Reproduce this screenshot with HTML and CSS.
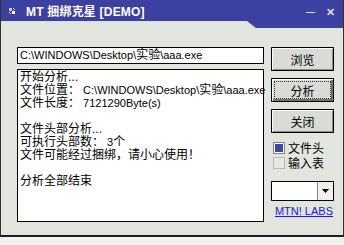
FILE: index.html
```html
<!DOCTYPE html>
<html>
<head>
<meta charset="utf-8">
<link rel="stylesheet" href="styles.css">
</head>
<body>
<div class="window">
  <div class="titlebar">
    <span class="app-icon"><svg width="8" height="8" viewBox="0 0 8 8"><path d="M1 1h3v3H1z" fill="#c8cce8"/><path d="M4 4h3v3H4z" fill="#ffffff"/><path d="M1 5l2 2M5 1l2 2" stroke="#e0e4ff" stroke-width="1"/></svg></span>
    <span class="title">MT 捆绑克星 [DEMO]</span>
    <span class="spacer"></span>
    <span class="tb-btn min">—</span>
    <span class="tb-btn close">✕</span>
  </div>
  <div class="content">
    <div class="left">
      <div class="path-input"><span class="en">C:\WINDOWS\Desktop\</span>实验<span class="en">\aaa.exe</span></div>
      <div class="log">
        <div class="line">开始分析...</div>
        <div class="line">文件位置：<span class="en">&nbsp;C:\WINDOWS\Desktop\</span>实验<span class="en">\aaa.exe</span></div>
        <div class="line">文件长度：<span class="en">&nbsp;7121290Byte(s)</span></div>
        <div class="line">&nbsp;</div>
        <div class="line">文件头部分析...</div>
        <div class="line">可执行头部数：<span class="en">&nbsp;3</span>个</div>
        <div class="line">文件可能经过捆绑，请小心使用！</div>
        <div class="line">&nbsp;</div>
        <div class="line">分析全部结束</div>
      </div>
    </div>
    <div class="right">
      <div class="btn">浏览</div>
      <div class="btn default"><span class="focus">分析</span></div>
      <div class="btn">关闭</div>
      <div class="checks">
        <div class="check"><span class="box checked"><span class="fill"></span></span><span>文件头</span></div>
        <div class="check"><span class="box"></span><span>输入表</span></div>
      </div>
      <div class="combo"><span class="combo-field"></span><span class="combo-btn"><svg width="7" height="4" viewBox="0 0 7 4"><path d="M0 0h7L3.5 4z" fill="#000"/></svg></span></div>
      <a class="link">MTN! LABS</a>
    </div>
  </div>
</div>
</body>
</html>
```

FILE: styles.css
```css
* { box-sizing: border-box; }
html, body { margin: 0; padding: 0; }
body {
  width: 344px;
  height: 245px;
  background: #f2f2f0;
  font-family: "Liberation Sans", "Noto Sans CJK SC", sans-serif;
  font-size: 12px;
  color: #000;
  overflow: hidden;
}
.en { font-size: 11px; }
.window {
  width: 344px;
  height: 237px;
  background: #e1e5dd;
  border-left: 1px solid #303030;
  border-right: 1px solid #303030;
  border-bottom: 2px solid #202020;
  display: flex;
  flex-direction: column;
}
.titlebar {
  position: relative;
  height: 21px;
  background: #3c40a0;
  display: flex;
  align-items: center;
  color: #fff;
  padding-left: 7px;
  padding-right: 6px;
  flex-shrink: 0;
}
.titlebar::after {
  content: "";
  position: absolute;
  left: 246px;
  right: 0;
  top: 21px;
  height: 7px;
  background: #3c40a0;
  clip-path: polygon(0 0, 100% 0, 100% 100%, 9px 100%);
}
.app-icon { width: 10px; height: 10px; display: flex; align-items: center; margin-top: 1px; }
.title {
  margin-left: 8px;
  font-weight: bold;
  font-size: 12px;
  letter-spacing: 0.2px;
}
.spacer { flex: 1; }
.tb-btn { font-size: 10px; color: #d8dcf4; font-weight: bold; margin-top: 3px; }
.min { margin-right: 11px; font-size: 9px; }
.close { font-size: 11px; margin-right: 2px; }
.content {
  display: flex;
  gap: 7px;
  padding: 26px 0 0 16px;
}
.left {
  width: 247px;
  display: flex;
  flex-direction: column;
  gap: 5px;
}
.path-input {
  height: 17px;
  background: #fff;
  border: 1px solid #000;
  padding-left: 2px;
  line-height: 15px;
  white-space: nowrap;
  overflow: hidden;
}
.log {
  height: 153px;
  background: #fff;
  border: 1px solid #000;
  padding: 1px 0 0 2px;
}
.line { height: 13px; line-height: 13px; white-space: nowrap; }
.right {
  width: 63px;
  display: flex;
  flex-direction: column;
}
.btn {
  height: 24px;
  background: #d9dbd6;
  border: 1px solid #000;
  box-shadow: inset 1px 1px 0 #fff, inset -1px -1px 0 #8a8a8a;
  display: flex;
  align-items: center;
  justify-content: center;
  margin-bottom: 7px;
  font-size: 12px;
}
.btn.default {
  border: 1px solid #000;
  box-shadow: inset 1px 1px 0 #fff, inset -2px -2px 0 #707070;
  padding: 3px;
}
.focus {
  flex: 1;
  align-self: stretch;
  display: flex;
  align-items: center;
  justify-content: center;
  outline: 1px dotted #333;
}
.checks {
  display: flex;
  flex-direction: column;
  gap: 2px;
  margin-top: 1px;
  padding-left: 2px;
}
.check {
  display: flex;
  align-items: center;
  gap: 3px;
  height: 13px;
}
.box {
  width: 12px;
  height: 12px;
  border: 1px solid #b8bcb4;
  background: #e6e8e2;
  display: flex;
  align-items: center;
  justify-content: center;
}
.box.checked { background: #fff; border-color: #7f8290; }
.fill { width: 8px; height: 8px; background: #3c48a4; }
.combo {
  margin-top: 12px;
  height: 20px;
  background: #fff;
  border: 1px solid #000;
  display: flex;
}
.combo-field { flex: 1; }
.combo-btn {
  width: 16px;
  border-left: 1px solid #888;
  background: #f0f0ee;
  display: flex;
  align-items: center;
  justify-content: center;
}
.link {
  margin-top: 4px;
  align-self: flex-end;
  color: #2020d0;
  text-decoration: underline;
  font-size: 11px;
  font-family: "Liberation Sans", sans-serif;
  margin-right: 1px;
}
```
